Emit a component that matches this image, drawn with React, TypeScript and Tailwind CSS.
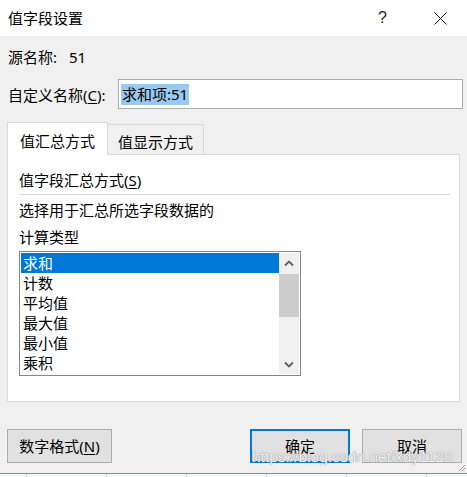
import React from "react";

const items = ["求和", "计数", "平均值", "最大值", "最小值", "乘积"];

function U({ c }: { c: string }) {
  return <span className="underline underline-offset-[2px] decoration-1">{c}</span>;
}

export default function App() {
  return (
    <div className="w-[467px] h-[477px] bg-[#f0f0f0] relative overflow-hidden flex flex-col text-[15px] leading-[20px] text-black font-['Noto_Sans','Noto_Sans_CJK_SC',sans-serif]">
      {/* title bar */}
      <div className="h-[36px] bg-white flex items-center shrink-0">
        <span className="pl-[8px]">值字段设置</span>
        <span className="ml-auto w-[9px] font-['Liberation_Sans',sans-serif] text-[16px] text-[#222]">?</span>
        <svg className="ml-[47px] mr-[20px]" width="13" height="13" viewBox="0 0 13 13">
          <path d="M0.5 0.5 L12.5 12.5 M12.5 0.5 L0.5 12.5" stroke="#111" strokeWidth="1" fill="none" />
        </svg>
      </div>

      {/* source name */}
      <div className="mt-[11px] h-[20px] flex items-center pl-[8px]">
        <span className="w-[61px]">源名称:</span>
        <span>51</span>
      </div>

      {/* custom name */}
      <div className="mt-[12px] flex items-center pl-[8px]">
        <span className="w-[110px] pt-[2px]">
          自定义名称(<U c="C" />):
        </span>
        <div className="w-[345px] h-[30px] border border-[#acacac] bg-white flex items-center pl-[2px]">
          <span className="bg-[#99c9ef] h-[21px] leading-[21px] px-[1px]">求和项:51</span>
        </div>
      </div>

      {/* tabs */}
      <div className="mt-[13px] h-[32px] flex items-end ml-[7px] shrink-0">
        <div className="relative z-10 -mb-px w-[101px] h-[33px] bg-white border border-b-0 border-[#d9d9d9] flex justify-center pt-[8px]">
          值汇总方式
        </div>
        <div className="w-[96px] h-[30px] bg-[#f0f0f0] border border-l-0 border-b-0 border-[#d9d9d9] flex justify-center pt-[7px]">
          值显示方式
        </div>
      </div>

      {/* panel */}
      <div className="ml-[7px] w-[453px] h-[248px] shrink-0 border border-[#d9d9d9] bg-white flex flex-col pl-[11px] pr-[9px]">
        <div className="mt-[15px] h-[20px]">
          值字段汇总方式(<U c="S" />)
        </div>
        <div className="mt-[4px] h-px bg-[#d9d9d9]" />
        <div className="mt-[5px] h-[20px]">选择用于汇总所选字段数据的</div>
        <div className="mt-[7px] h-[20px]">计算类型</div>
        <div className="mt-[4px] w-[282px] h-[125px] border border-[#828790] p-[1px] flex">
          <div className="flex-1 flex flex-col">
            {items.map((it, i) => (
              <div
                key={it}
                className={
                  i === 0
                    ? "h-[20px] pl-[2px] bg-[#0078d7] text-white"
                    : "h-[20px] pl-[2px]"
                }
              >
                {it}
              </div>
            ))}
          </div>
          <div className="w-[20px] bg-[#f0f0f0] flex flex-col">
            <div className="h-[21px] flex items-center justify-center">
              <svg width="10" height="7" viewBox="0 0 10 7">
                <path d="M1 5.5 L5 1.5 L9 5.5" stroke="#606060" strokeWidth="1.8" fill="none" />
              </svg>
            </div>
            <div className="h-[43px] bg-[#cdcdcd]" />
            <div className="flex-1" />
            <div className="h-[20px] flex items-center justify-center">
              <svg width="10" height="7" viewBox="0 0 10 7">
                <path d="M1 1.5 L5 5.5 L9 1.5" stroke="#606060" strokeWidth="1.8" fill="none" />
              </svg>
            </div>
          </div>
        </div>
      </div>

      {/* buttons */}
      <div className="mt-[27px] flex ml-[7px] shrink-0">
        <div className="w-[105px] h-[34px] bg-[#e1e1e1] border border-[#adadad] flex items-center justify-center">
          数字格式(<U c="N" />)
        </div>
        <div className="ml-[138px] w-[100px] h-[34px] bg-[#e1e1e1] border-2 border-[#0078d7] flex items-center justify-center">
          确定
        </div>
        <div className="ml-[12px] w-[100px] h-[34px] bg-[#e1e1e1] border border-[#adadad] flex items-center justify-center">
          取消
        </div>
      </div>

      {/* resize grip */}
      <svg className="absolute right-[1px] top-[462px]" width="10" height="10" viewBox="0 0 10 10">
        <path d="M9 3 L3 9 M9 6 L6 9" stroke="#9a9a9a" strokeWidth="1" fill="none" />
      </svg>

      {/* underlying excel strip */}
      <div className="mt-auto h-[4px] shrink-0 flex flex-col">
        <div className="h-[1px] bg-[#4d9fe0]" />
        <div className="flex-1 bg-[#f7f7f7] flex">
          <div className="w-[27px] border-r border-[#d4d4d4]" />
          <div className="w-[80px] border-r border-[#d4d4d4]" />
          <div className="w-[80px] border-r border-[#d4d4d4]" />
          <div className="w-[80px] border-r border-[#d4d4d4]" />
          <div className="w-[80px] border-r border-[#d4d4d4]" />
          <div className="w-[80px] border-r border-[#d4d4d4]" />
        </div>
      </div>

      {/* watermark */}
      <div className="absolute left-[252px] top-[448px] text-[15.5px] leading-[18px] font-['Liberation_Sans',sans-serif] text-white/90 [text-shadow:0_0_1px_#8a8a8a,0_0_1px_#8a8a8a]">
        https://blog.csdn.net/xdy1120
      </div>
    </div>
  );
}
